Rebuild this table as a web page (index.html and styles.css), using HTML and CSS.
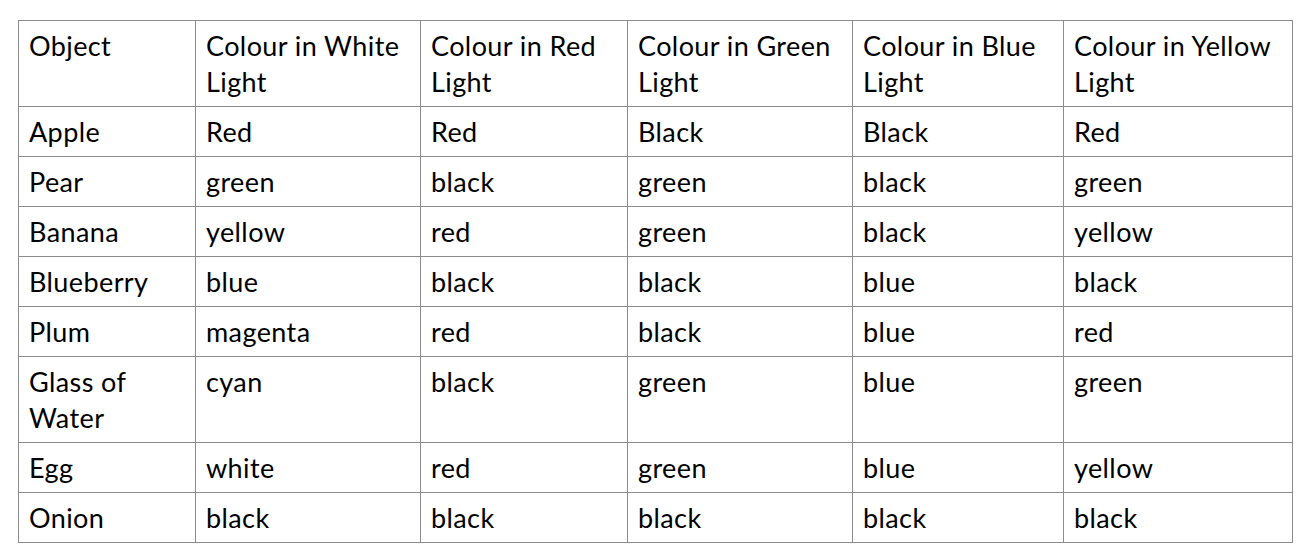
FILE: index.html
```html
<!DOCTYPE html>
<html>
<head>
<meta charset="utf-8">
<link rel="stylesheet" href="styles.css">
</head>
<body>
<table class="grid">
  <colgroup>
    <col class="c1"><col class="c2"><col class="c3"><col class="c4"><col class="c5"><col class="c6">
  </colgroup>
  <tr><td>Object</td><td>Colour in White Light</td><td>Colour in Red Light</td><td>Colour in Green Light</td><td>Colour in Blue Light</td><td>Colour in Yellow Light</td></tr>
  <tr><td>Apple</td><td>Red</td><td>Red</td><td>Black</td><td>Black</td><td>Red</td></tr>
  <tr><td>Pear</td><td>green</td><td>black</td><td>green</td><td>black</td><td>green</td></tr>
  <tr><td>Banana</td><td>yellow</td><td>red</td><td>green</td><td>black</td><td>yellow</td></tr>
  <tr><td>Blueberry</td><td>blue</td><td>black</td><td>black</td><td>blue</td><td>black</td></tr>
  <tr><td>Plum</td><td>magenta</td><td>red</td><td>black</td><td>blue</td><td>red</td></tr>
  <tr><td>Glass of Water</td><td>cyan</td><td>black</td><td>green</td><td>blue</td><td>green</td></tr>
  <tr><td>Egg</td><td>white</td><td>red</td><td>green</td><td>blue</td><td>yellow</td></tr>
  <tr><td>Onion</td><td>black</td><td>black</td><td>black</td><td>black</td><td>black</td></tr>
</table>
</body>
</html>
```
FILE: styles.css
```css
html, body {
  margin: 0;
  padding: 0;
  background: #ffffff;
}
body {
  padding: 20px 0 0 18px;
  font-family: Lato, "Open Sans", sans-serif;
  font-size: 27px;
  letter-spacing: 0.4px;
  color: #000;
}
.grid {
  border-collapse: collapse;
  table-layout: fixed;
  width: 1275px;
}
.c1 { width: 177px; }
.c2 { width: 225px; }
.c3 { width: 207px; }
.c4 { width: 225px; }
.c5 { width: 211px; }
.c6 { width: 229px; }
.grid td {
  border: 1px solid #8c8c8c;
  vertical-align: top;
  padding: 7px 10px 6px 10px;
  line-height: 36px;
  height: 36px;
}
```
